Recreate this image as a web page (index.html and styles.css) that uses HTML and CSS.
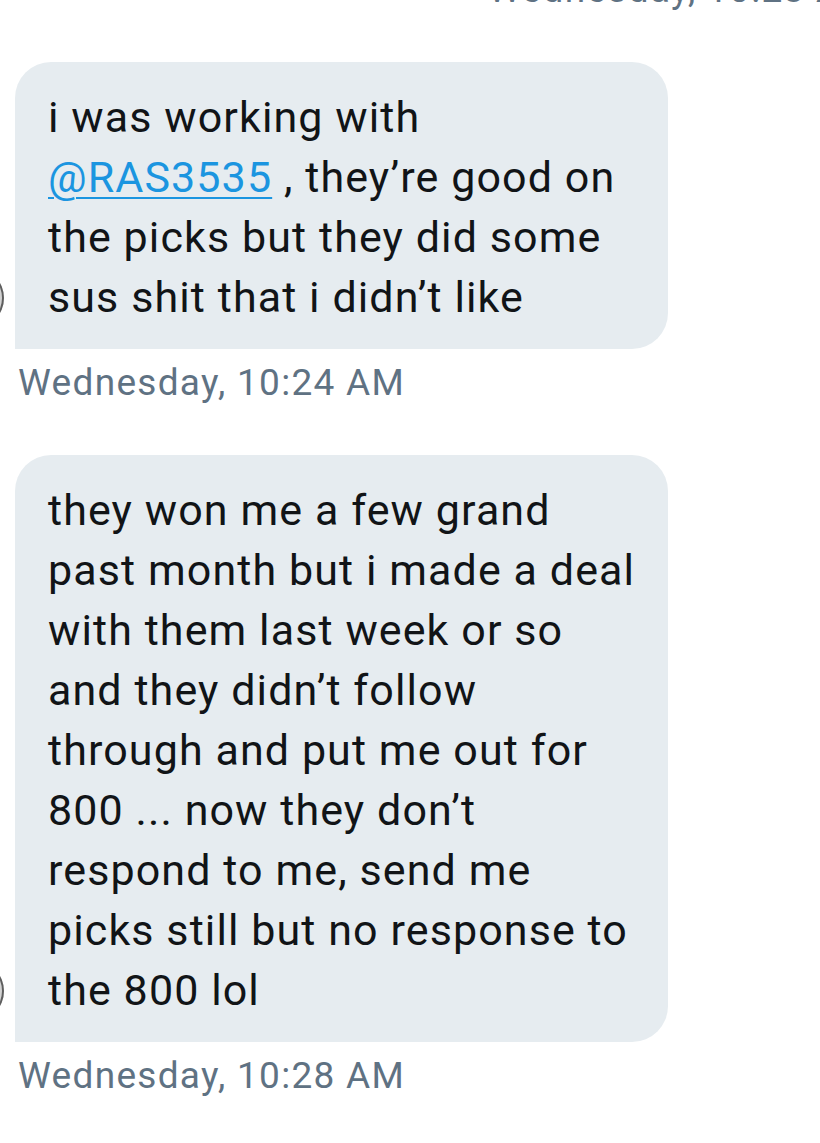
FILE: index.html
```html
<!DOCTYPE html>
<html>
<head>
<meta charset="utf-8">
<link rel="stylesheet" href="styles.css">
</head>
<body>
<div class="thread">
  <div class="time time-right">Wednesday, 10:23 AM</div>

  <div class="msg">
    <div class="avatar"></div>
    <div class="bubble">
      <span class="line">i was working with</span>
      <span class="line"><a class="mention" href="#">@RAS3535</a> , they’re good on</span>
      <span class="line">the picks but they did some</span>
      <span class="line">sus shit that i didn’t like</span>
    </div>
  </div>
  <div class="time">Wednesday, 10:24 AM</div>

  <div class="msg">
    <div class="avatar"></div>
    <div class="bubble">
      <span class="line">they won me a few grand</span>
      <span class="line">past month but i made a deal</span>
      <span class="line">with them last week or so</span>
      <span class="line">and they didn’t follow</span>
      <span class="line">through and put me out for</span>
      <span class="line">800 ... now they don’t</span>
      <span class="line">respond to me, send me</span>
      <span class="line">picks still but no response to</span>
      <span class="line">the 800 lol</span>
    </div>
  </div>
  <div class="time">Wednesday, 10:28 AM</div>
</div>
</body>
</html>
```

FILE: styles.css
```css
html, body {
  margin: 0;
  padding: 0;
  background: #ffffff;
}

body {
  width: 820px;
  height: 1143px;
  overflow: hidden;
  font-family: Roboto, "Noto Sans", "Liberation Sans", sans-serif;
}

.thread {
  display: flex;
  flex-direction: column;
  padding-left: 15px;
  width: 805px;
  overflow: hidden;
}

.time {
  font-size: 37px;
  letter-spacing: 1.3px;
  line-height: 44px;
  color: #5f7283;
  margin-top: 12px;
  margin-left: 3px;
  white-space: nowrap;
}

.time-right {
  margin-top: -32px;
  margin-left: 473px;
}

.msg {
  position: relative;
  margin-top: 50px;
}

.avatar {
  position: absolute;
  left: -71px;
  bottom: 21px;
  width: 60px;
  height: 60px;
  border-radius: 50%;
  background: #d4d4d4;
  box-shadow: inset -2px 0 0 #5e5e5e;
}

.bubble {
  width: 620px;
  background: #e6ecf0;
  border-radius: 36px 36px 36px 0;
  padding: 25px 0 22px 33px;
  color: #111417;
  font-size: 43px;
  letter-spacing: 1.1px;
  line-height: 60px;
}

.line {
  display: block;
  white-space: nowrap;
}

.mention {
  color: #1b95e0;
  text-decoration: underline;
  text-decoration-thickness: 2px;
  text-underline-offset: 5px;
}
```
